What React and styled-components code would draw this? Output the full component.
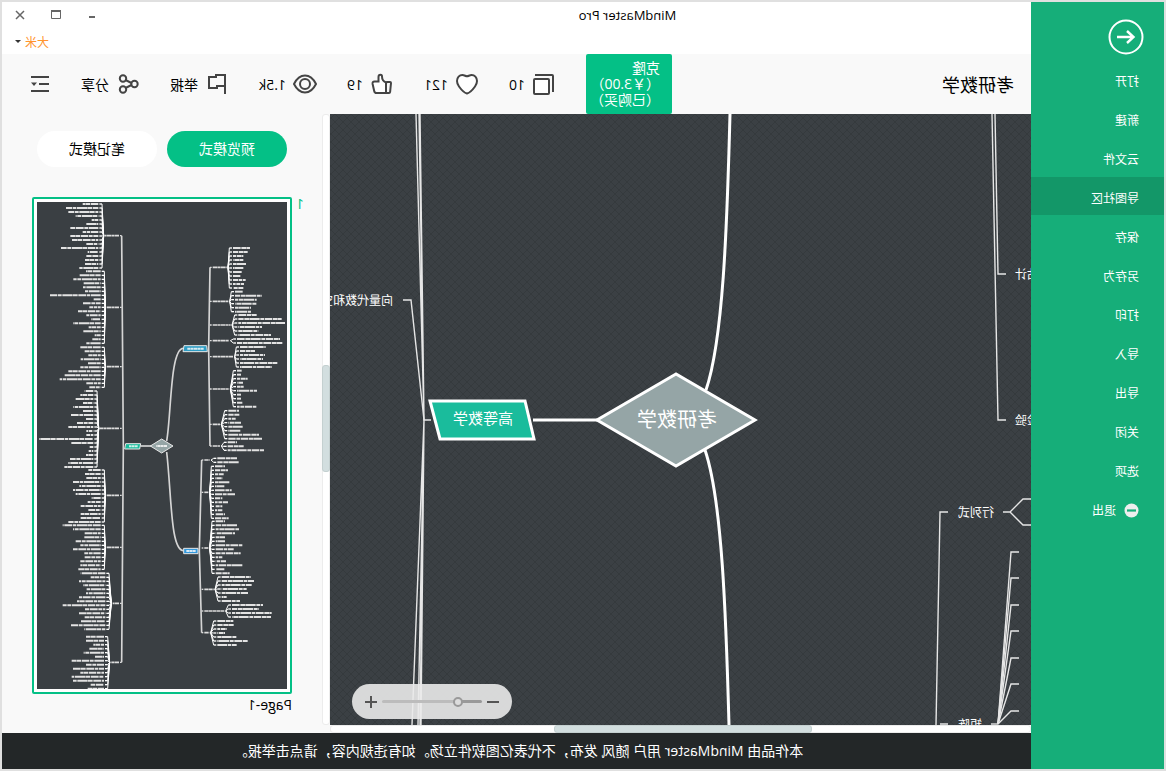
import React, { useState } from 'react';
import styled, { createGlobalStyle, css } from 'styled-components';

const GlobalStyle = createGlobalStyle`
  * {
    box-sizing: border-box;
  }

  body {
    margin: 0;
    overflow: hidden;
    font-family: 'Open Sans', 'Noto Sans CJK SC', sans-serif;
    font-size: 14px;
    color: #000;
  }

  button, input {
    font: inherit;
    color: inherit;
    margin: 0;
    padding: 0;
    border: 0;
    background: none;
  }
`;

/* the whole window is shown flipped, as in a mirror */
const Window = styled.div`
  display: flex;
  width: 100%;
  height: 100vh;
  border: 2px solid #e0e0e0;
  background: #f9f9f9;
  transform: scaleX(-1);
`;

const Sidebar = styled.nav`
  flex: 0 0 133px;
  display: flex;
  flex-direction: column;
  background: #16ae79;
  color: #fff;
  font-size: 12px;
`;

const BackButton = styled.button`
  width: 36px;
  height: 36px;
  margin: 17px 0 5px 20px;

  svg {
    display: block;
  }
`;

const MenuItem = styled.button`
  display: flex;
  align-items: center;
  gap: 8px;
  height: 38px;
  margin-bottom: 1px;
  padding: 4px 0 0 25px;
  text-align: left;
  background: ${(p) => (p.$active ? '#139768' : 'transparent')};
`;

const Main = styled.div`
  flex: 1;
  min-width: 0;
  display: flex;
  flex-direction: column;
`;

const Header = styled.header`
  flex: 0 0 52px;
  background: #fff;
`;

const HeaderRow = styled.div`
  display: flex;
  align-items: center;
  justify-content: flex-end;
  height: 26px;
`;

const AppTitle = styled.div`
  flex: 1;
  text-align: center;
  font-size: 13px;
`;

const WindowControls = styled.div`
  flex: 0 0 222px;
  display: flex;
  justify-content: flex-end;
`;

const WindowButton = styled.button`
  display: grid;
  place-items: center;
  width: 36px;
  height: 24px;
`;

const UserButton = styled.button`
  display: flex;
  align-items: center;
  gap: 4px;
  padding: 2px 13px 0 0;
  font-size: 12px;
  color: #ff942f;
`;

const Toolbar = styled.div`
  flex: 0 0 60px;
  display: flex;
  align-items: center;
  gap: 30px;
  padding: 0 29px 0 17px;
`;

const DocTitle = styled.h1`
  flex: 1;
  margin: 0;
  font-size: 18px;
  font-weight: 400;
  white-space: nowrap;
`;

const CloneButton = styled.button`
  width: 86px;
  height: 60px;
  padding: 0 4px 0 12px;
  border-radius: 2px;
  background: #04c086;
  color: #fff;
  line-height: 16px;
  text-align: left;
  white-space: nowrap;
`;

const CloneLine = styled.span`
  display: block;
`;

const Tool = styled.button`
  display: flex;
  align-items: center;
  gap: 7px;
  white-space: nowrap;

  svg {
    display: block;
    fill: none;
    stroke: #444;
    stroke-width: 2;
  }
`;

const Body = styled.div`
  flex: 1;
  min-height: 0;
  display: flex;
`;

const Workspace = styled.div`
  flex: 1;
  min-width: 0;
  display: flex;
  flex-direction: column;
`;

const Canvas = styled.div`
  flex: 1;
  min-height: 0;
  position: relative;
  overflow: hidden;
  background: #3b4044;
`;

const MapSvg = styled.svg`
  display: block;
  width: 100%;
  height: 100%;
`;

const ScrollTrack = styled.div`
  flex: 0 0 8px;
  display: flex;
  border: 1px solid #ececec;
  border-radius: 3px;
  background: #fff;
  ${(p) =>
    p.$vertical &&
    css`
      flex-direction: column;
      margin-bottom: 8px;
    `}
`;

const ScrollThumb = styled.div`
  flex: 0 0 ${(p) => p.$size};
  border: 1px solid #c4d0d0;
  border-radius: 3px;
  background: #d2dedf;
  margin: ${(p) => (p.$vertical ? '250px -1px 0' : '-1px 0 -1px 218px')};
`;

const ZoomBar = styled.div`
  position: absolute;
  right: 22px;
  bottom: 6px;
  display: flex;
  align-items: center;
  justify-content: space-between;
  width: 160px;
  height: 35px;
  padding: 0 12px;
  border-radius: 18px;
  background: rgba(234, 234, 234, 0.9);
`;

const ZoomButton = styled.button`
  display: grid;
  place-items: center;
  width: 14px;
  height: 24px;
`;

const ZoomSlider = styled.input`
  appearance: none;
  width: 100px;
  height: 3px;
  border-radius: 2px;
  background: linear-gradient(to right, #999 24%, #bcbcbc 24%);

  &::-webkit-slider-thumb {
    appearance: none;
    width: 10px;
    height: 10px;
    border: 2px solid #999;
    border-radius: 50%;
    background: #dcdcdc;
  }
`;

const Panel = styled.aside`
  flex: 0 0 320px;
  padding: 17px 30px 0 18px;
`;

const ModeTabs = styled.div`
  display: flex;
  gap: 10px;
  padding-left: 17px;
`;

const ModeButton = styled.button`
  width: 120px;
  height: 36px;
  padding-bottom: 2px;
  border-radius: 18px;
  background: ${(p) => (p.$active ? '#04c086' : '#fff')};
  color: ${(p) => (p.$active ? '#fff' : '#000')};
`;

const PageItem = styled.div`
  display: grid;
  grid-template-columns: 12px 260px;
  margin-top: 30px;
`;

const PageNumber = styled.div`
  line-height: 14px;
  color: #04c086;
`;

const PagePreview = styled.div`
  padding: 3px;
  border: 2px solid #04c086;
  border-radius: 2px;
  background: #fff;

  svg {
    display: block;
    width: 100%;
    background: #3a3f43;
  }
`;

const PageLabel = styled.div`
  grid-column: 2;
  line-height: 22px;
`;

const Footer = styled.footer`
  flex: 0 0 36px;
  display: flex;
  align-items: center;
  justify-content: center;
  padding: 0 4px 2px 0;
  background: #232728;
  color: #fff;
  white-space: nowrap;
`;

const MENU = ['打开', '新建', '云文件', '导图社区', '保存', '另存为', '打印', '导入', '导出', '关闭', '选项'];

const TOOLS = [
  {
    name: '克隆',
    text: '10',
    icon: (
      <>
        <rect x="7" y="7" width="15" height="15" rx="1" fill="#fff" />
        <path d="M3 20V4a1 1 0 0 1 1-1h17" />
      </>
    ),
  },
  {
    name: '收藏',
    text: '121',
    icon: (
      <path
        fill="#fff"
        d="M12 21.5C10 21 6.500 18 4 14.500C2.500 12.500 2 11 2 9C2 5.500 4.500 3 7.300 3C9.500 3 10.500 4.300 12 4.300S14.500 3 16.700 3C19.500 3 22 5.500 22 9C22 11 21.500 12.500 20 14.500C17.500 18 14 21 12 21.500Z"
      />
    ),
  },
  {
    name: '点赞',
    text: '19',
    icon: (
      <>
        <path
          fill="#fff"
          d="M8 21H17.500C19 21 19.500 20.500 19.800 19L21.400 12C21.600 10.500 21 9.500 19.500 9.500H15.500V5C15.500 3.500 15 2.700 13.500 2.700C12.300 2.700 12 3.500 12 4.500C12 7 10.500 9.500 8 10.500Z"
        />
        <path d="M4 10H7L8 11V21H5Q4 21 3.900 20L3 11Q3 10 4 10Z" />
      </>
    ),
  },
  {
    name: '浏览',
    text: '1.5k',
    icon: (
      <>
        <path d="M1 12C4 6 8 3.500 12 3.500S20 6 23 12C20 18 16 20.500 12 20.500S4 18 1 12Z" />
        <circle cx="12" cy="12" r="5" />
      </>
    ),
  },
  {
    name: '举报',
    text: '举报',
    icon: <path d="M4 22V3H13V5H20V16H12V14H4" />,
  },
  {
    name: '分享',
    text: '分享',
    icon: (
      <>
        <circle cx="17" cy="6.500" r="3.200" />
        <circle cx="17" cy="17.500" r="3.200" />
        <circle cx="5.500" cy="12" r="3.200" />
        <path d="M8.500 11L14.500 8M8.500 13L14.500 16" />
      </>
    ),
  },
];

/* topics on the right half of the preview, one entry per fan of leaves */
const RIGHT_FANS = [
  { node: 101, end: 546, x: 566, y: 6, leaves: [47, 97, 90, 68, 20, 36, 85, 47, 84, 79, 36, 112, 32, 37, 40, 40, 57] },
  { node: 316, end: 541, x: 559, y: 208, leaves: [44, 63, 82, 53, 53, 47, 152, 21, 54, 34, 68, 43, 29, 83, 36, 53, 18, 25, 43] },
  { node: 494, end: 541, x: 559, y: 436, leaves: [61, 48, 37, 60, 38, 61, 97, 109, 123, 43, 34] },
  { node: 679, end: 561, x: 581, y: 567, leaves: [26, 39, 53, 31, 60, 31, 67, 22, 49, 75, 21, 21, 163, 67, 11, 14, 22, 70, 75, 87] },
  { node: 880, end: 541, x: 559, y: 804, leaves: [37, 47, 43, 83, 64, 83, 75, 27, 39, 60, 37, 60, 60, 97] },
  { node: 1036, end: 541, x: 559, y: 970, leaves: [114, 83, 48, 49, 75, 61, 83, 49, 48, 61, 61, 67] },
  { node: 1204, end: 523, x: 545, y: 1114, leaves: [74, 44, 79, 67, 58, 58, 79, 85, 128, 61, 79, 62, 75, 103, 63] },
  { node: 1381, end: 528, x: 549, y: 1304, leaves: [54, 54, 32, 44, 61, 27, 97, 54, 93, 71, 97, 93, 40, 49] },
];

const UPPER_FANS = [
  { node: 196, end: 181, x: 162, y: 138, leaves: [51, 44, 31, 31, 39, 31, 26, 24, 38, 33, 31] },
  { node: 298, end: 176, x: 156, y: 269, leaves: [25, 81, 65, 66, 48, 48] },
  { node: 369, end: 169, x: 146, y: 339, leaves: [55, 130, 140, 71, 60, 98] },
  { node: 416, end: 174, x: 150, y: 411, leaves: [129, 136] },
  { node: 464, end: 161, x: 141, y: 435, leaves: [77, 45, 75, 69, 112, 95] },
  { node: 561, end: 174, x: 150, y: 506, leaves: [14, 12, 32, 19, 20, 60, 12, 12, 18, 58] },
  { node: 667, end: 201, x: 176, y: 626, leaves: [32, 34, 22, 38, 45, 38, 92, 101] },
  { node: 732, end: 201, x: 178, y: 721, leaves: [28, 48, 109] },
];

const LOWER_FANS = [
  { node: 774, end: 232, x: 209, y: 769, leaves: [59, 64] },
  { node: 871, end: 236, x: 216, y: 793, leaves: [30, 39, 27, 22, 44, 28, 50, 62, 22, 39, 22, 22, 30, 41] },
  { node: 1038, end: 236, x: 214, y: 958, leaves: [28, 66, 71, 58, 28, 28, 80, 54, 75, 20, 31, 80, 28, 42] },
  { node: 1162, end: 220, x: 196, y: 1125, leaves: [88, 97, 90, 75, 79, 15, 55] },
  { node: 1227, end: 188, x: 165, y: 1209, leaves: [93, 81, 119, 117] },
  { node: 1292, end: 233, x: 209, y: 1257, leaves: [48, 49, 28, 23, 59, 92, 58] },
];

const LEAF_DASH = '23 2 14 1 31 2 11 2';

const Fan = ({ node, end, x, y, leaves, start, dir }) => {
  const root = end + dir * 4;
  const tip = x - dir * 11;

  return (
    <g>
      <path d={`M${start} ${node}H${start + dir * 5}`} stroke="#ddd" strokeWidth="4" />
      <path d={`M${start + dir * 8} ${node}H${end}`} stroke="#ddd" strokeWidth="5" strokeDasharray="13 1 9 1" />
      {leaves.map((length, i) => {
        const rowY = y + i * 12;
        return (
          <g key={rowY}>
            <path d={`M${root} ${node}L${tip} ${rowY}`} stroke="#fff" strokeWidth="3" />
            <path d={`M${tip} ${rowY}H${x - dir * 3}`} stroke="#fff" strokeWidth="4" />
            <path d={`M${x} ${rowY}h${dir * length}`} stroke="#e2e2e2" strokeWidth="6" strokeDasharray={LEAF_DASH} strokeDashoffset={i * 7} />
          </g>
        );
      })}
    </g>
  );
};

const Preview = () => (
  <svg viewBox="0 0 750 1461" fill="none" role="img" aria-label="Page-1">
    <g stroke="#d5d5d5" strokeWidth="5">
      <path d="M361 717C347 640 351 439 311 439M361 750C346 880 350 1046 310 1046" />
      <path d="M400 732H440" />
      <path d="M496 101L491 732L496 1381" />
      <path d="M231 196L235 439L231 732" />
      <path d="M256 774L263 1046L256 1292" />
    </g>
    {RIGHT_FANS.map((fan) => (
      <Fan key={fan.node} {...fan} start={496} dir={1} />
    ))}
    {UPPER_FANS.map((fan) => (
      <Fan key={fan.node} {...fan} start={231} dir={-1} />
    ))}
    {LOWER_FANS.map((fan) => (
      <Fan key={fan.node} {...fan} start={256} dir={-1} />
    ))}
    <g stroke="#e8e8e8" strokeWidth="3">
      <path d="M376 711L410 732L376 753L342 732Z" fill="#95a5a6" />
      <path d="M439 725H484L487 741H442Z" fill="#1abc9c" />
      <path d="M241 431H309L312 449H239Z" fill="#2e9cc3" />
      <path d="M267 1039H310V1055H267Z" fill="#3498db" />
    </g>
    <g stroke="#fff" strokeWidth="6" opacity="0.8">
      <path d="M360 732H392M448 733H474M250 440H300M274 1047H302" strokeDasharray="9 1" />
    </g>
  </svg>
);

const MindMap = () => (
  <MapSvg viewBox="0 0 701 611" preserveAspectRatio="xMidYMid slice" fill="none">
    <defs>
      <pattern id="mesh" width="8" height="8" patternUnits="userSpaceOnUse">
        <path d="M0 0L8 8M8 0L0 8" stroke="#353a3d" strokeWidth="1" />
      </pattern>
    </defs>
    <rect width="701" height="611" fill="url(#mesh)" />

    <g stroke="#fff" strokeWidth="3">
      <path d="M325 276C308 226 304 116 301 0" />
      <path d="M326 336C309 386 305 500 302 611" />
      <path d="M434 306H498" />
      <path d="M355 260L434 306L355 352L276 306Z" fill="#95a5a6" />
      <path d="M601 287H506L497 325H591Z" fill="#1abc9c" />
    </g>

    <g stroke="#e6e6e6" strokeWidth="1.400">
      <path d="M600 306H607L615 0M607 306L611 0M607 306L612 0" />
      <path d="M607 306L619 611M607 306L613 611M607 306L611 611M607 306L610 611" />
      <path d="M607 306L620 186H628" />
      <path d="M36 0L33 160H25" />
      <path d="M39 0L33 306H25" />
      <path d="M0 385H8L21 398L8 411H0M21 398H28" />
      <path d="M83 398H91L95 611M83 610H91" />
      <path d="M33 610H40" />
      {[438, 464, 491, 517, 544, 570, 597].map((y) => (
        <path key={y} d={`M12 ${y}H20L33 610`} />
      ))}
    </g>

    <g fill="#fff" fontSize="12">
      <text x="638" y="191">向量代数和空间解析几何</text>
      <text x="16" y="165" textAnchor="end">参数估计</text>
      <text x="16" y="311" textAnchor="end">假设检验</text>
      <text x="37" y="403">行列式</text>
      <text x="49" y="615">矩阵</text>
      <text x="548" y="310" fontSize="15" textAnchor="middle">高等数学</text>
      <text x="354" y="313" fontSize="20" textAnchor="middle">考研数学</text>
    </g>
  </MapSvg>
);

const App = () => {
  const [active, setActive] = useState('导图社区');
  const [zoom, setZoom] = useState(21);

  return (
    <>
      <GlobalStyle />
      <Window>
        <Sidebar>
          <BackButton aria-label="返回">
            <svg width="36" height="36" viewBox="0 0 36 36" fill="none" stroke="#fff">
              <circle cx="18" cy="18" r="16.500" strokeWidth="2" />
              <path d="M27 18H11M17 12L10.500 18L17 24" strokeWidth="2.400" />
            </svg>
          </BackButton>
          {MENU.map((item) => (
            <MenuItem key={item} $active={item === active} onClick={() => setActive(item)}>
              {item}
            </MenuItem>
          ))}
          <MenuItem>
            <svg width="15" height="15" viewBox="0 0 15 15">
              <circle cx="7.500" cy="7.500" r="7" fill="#eee" />
              <path d="M3 7.500H12" stroke="#16ae79" strokeWidth="2.200" />
            </svg>
            退出
          </MenuItem>
        </Sidebar>

        <Main>
          <Header>
            <HeaderRow>
              <AppTitle>MindMaster Pro</AppTitle>
              <WindowControls>
                <WindowButton aria-label="最小化">
                  <svg width="10" height="10" viewBox="0 0 10 10">
                    <path d="M2 7H8" stroke="#666" strokeWidth="2" />
                  </svg>
                </WindowButton>
                <WindowButton aria-label="最大化">
                  <svg width="10" height="10" viewBox="0 0 10 10" fill="none">
                    <path d="M0.500 1V8.500H9.500V1" stroke="#666" />
                    <path d="M0 1H10" stroke="#666" strokeWidth="2" />
                  </svg>
                </WindowButton>
                <WindowButton aria-label="关闭窗口">
                  <svg width="10" height="10" viewBox="0 0 10 10">
                    <path d="M1 1L9 9M9 1L1 9" stroke="#666" strokeWidth="1.500" />
                  </svg>
                </WindowButton>
              </WindowControls>
            </HeaderRow>
            <HeaderRow>
              <UserButton>
                大米
                <svg width="6" height="4" viewBox="0 0 6 4">
                  <path d="M0 0H6L3 3Z" fill="#333" />
                </svg>
              </UserButton>
            </HeaderRow>
          </Header>

          <Toolbar>
            <DocTitle>考研数学</DocTitle>
            <CloneButton>
              <CloneLine>克隆</CloneLine>
              <CloneLine>（￥3.00）</CloneLine>
              <CloneLine>（已购买）</CloneLine>
            </CloneButton>
            {TOOLS.map((tool) => (
              <Tool key={tool.name} title={tool.name}>
                <svg width="24" height="24" viewBox="0 0 24 24">
                  {tool.icon}
                </svg>
                {tool.text}
              </Tool>
            ))}
            <Tool aria-label="列表">
              <svg width="20" height="18" viewBox="-2 0 20 18">
                <path d="M0 2H18M0 9H10M0 16H18" />
                <path d="M12 7.500H18L15 11Z" fill="#444" stroke="none" />
              </svg>
            </Tool>
          </Toolbar>

          <Body>
            <Workspace>
              <Canvas>
                <MindMap />
                <ZoomBar>
                  <ZoomButton aria-label="缩小" onClick={() => setZoom(Math.max(0, zoom - 5))}>
                    <svg width="12" height="12" viewBox="0 0 12 12">
                      <path d="M0 6H12" stroke="#555" strokeWidth="2" />
                    </svg>
                  </ZoomButton>
                  <ZoomSlider
                    type="range"
                    aria-label="缩放"
                    value={zoom}
                    onChange={(e) => setZoom(Number(e.target.value))}
                  />
                  <ZoomButton aria-label="放大" onClick={() => setZoom(Math.min(100, zoom + 5))}>
                    <svg width="12" height="12" viewBox="0 0 12 12">
                      <path d="M0 6H12M6 0V12" stroke="#555" strokeWidth="2" />
                    </svg>
                  </ZoomButton>
                </ZoomBar>
              </Canvas>
              <ScrollTrack>
                <ScrollThumb $size="258px" />
              </ScrollTrack>
            </Workspace>
            <ScrollTrack $vertical>
              <ScrollThumb $vertical $size="107px" />
            </ScrollTrack>
            <Panel>
              <ModeTabs>
                <ModeButton $active>预览模式</ModeButton>
                <ModeButton>笔记模式</ModeButton>
              </ModeTabs>
              <PageItem>
                <PageNumber>1</PageNumber>
                <PagePreview>
                  <Preview />
                </PagePreview>
                <PageLabel>Page-1</PageLabel>
              </PageItem>
            </Panel>
          </Body>

          <Footer>本作品由 MindMaster 用户 随风 发布，不代表亿图软件立场。如有违规内容，请点击举报。</Footer>
        </Main>
      </Window>
    </>
  );
};

export default App;
